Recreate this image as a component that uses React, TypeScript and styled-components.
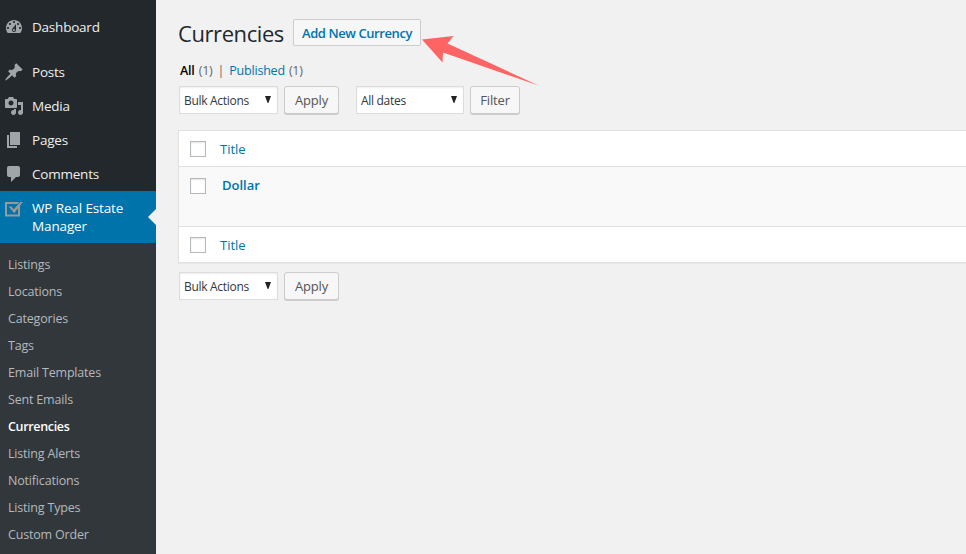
import React from "react";
import styled, { createGlobalStyle, css } from "styled-components";

const GlobalStyle = createGlobalStyle`
  *, *::before, *::after { box-sizing: border-box; }
  html, body { margin: 0; padding: 0; }
  body {
    background: #f1f1f1;
    color: #444;
    font-family: "Open Sans", "Noto Sans", sans-serif;
    font-size: 13px;
    overflow: hidden;
  }
  a { color: #0073aa; text-decoration: none; }
`;

const Page = styled.div`
  display: flex;
  width: 100%;
  height: 100vh;
  overflow: hidden;
`;

const Sidebar = styled.nav`
  flex: 0 0 156px;
  padding-top: 10px;
  background: #23282d;
`;

const MenuGap = styled.div`
  height: 11px;
`;

const MenuItem = styled.a<{ $active?: boolean }>`
  position: relative;
  display: flex;
  align-items: flex-start;
  min-height: 34px;
  padding: 8px 10px 8px 4px;
  color: ${(p) => (p.$active ? "#fff" : "#eee")};
  background: ${(p) => (p.$active ? "#0073aa" : "transparent")};
  font-size: 13.5px;
  line-height: 18px;

  ${(p) =>
    p.$active &&
    css`
      &::after {
        content: "";
        position: absolute;
        right: 0;
        top: 18px;
        border: 8px solid transparent;
        border-right-color: #f1f1f1;
        border-left-width: 0;
      }
    `}
`;

const MenuIcon = styled.svg<{ $active?: boolean }>`
  flex: 0 0 20px;
  width: 20px;
  height: 20px;
  margin: -1px 8px -1px 0;
  fill: ${(p) => (p.$active ? "#999" : "#a0a5aa")};
`;

const MenuLabel = styled.span<{ $wide?: boolean }>`
  letter-spacing: ${(p) => (p.$wide ? -0.13 : -0.22)}px;
  white-space: pre-line;
`;

const Submenu = styled.div`
  display: flex;
  flex-direction: column;
  padding: 8px 0;
  background: #32373c;
`;

const SubmenuItem = styled.a<{ $current?: boolean }>`
  height: 27px;
  padding-left: 8px;
  color: ${(p) => (p.$current ? "#fff" : "#b4b9be")};
  font-size: 12.5px;
  font-weight: ${(p) => (p.$current ? 600 : 400)};
  line-height: 27px;
  letter-spacing: ${(p) => (p.$current ? -0.33 : -0.18)}px;
`;

const Main = styled.main`
  position: relative;
  flex: 1;
  min-width: 0;
  padding: 19px 0 0 22px;
`;

const Heading = styled.header`
  display: flex;
  align-items: flex-start;
  height: 42px;
`;

const Title = styled.h1`
  width: 115px;
  margin: 0;
  color: #23282d;
  font-size: 22px;
  font-weight: 400;
  line-height: 28px;
  letter-spacing: -0.42px;
`;

const AddButton = styled.a`
  width: 128px;
  height: 27px;
  border: 1px solid #ccc;
  border-radius: 2px;
  background: #f7f7f7;
  font-size: 13px;
  font-weight: 600;
  line-height: 27px;
  letter-spacing: -0.42px;
  text-align: center;
`;

const Filters = styled.div`
  display: flex;
  height: 25px;
  padding-left: 2px;
  color: #666;
  font-size: 12.5px;
  line-height: 19px;
  letter-spacing: -0.2px;
`;

const FilterLink = styled.a<{ $current?: boolean }>`
  margin-right: 4px;
  color: ${(p) => (p.$current ? "#000" : "#0073aa")};
  font-weight: ${(p) => (p.$current ? 600 : 400)};
`;

const Divider = styled.span`
  margin: 0 5px 0 5px;
`;

const ActionBar = styled.div`
  display: flex;
  height: 29px;
  padding-left: 1px;
`;

const Select = styled.div<{ $width: number }>`
  display: flex;
  align-items: center;
  justify-content: space-between;
  width: ${(p) => p.$width}px;
  height: 28px;
  padding: 1px 6px 0 4px;
  border: 1px solid #ddd;
  background: #fff;
  box-shadow: inset 0 1px 2px rgba(0, 0, 0, 0.07);
  color: #32373c;
  font-size: 12px;
  letter-spacing: -0.3px;
`;

const Caret = styled.svg`
  width: 6px;
  height: 7px;
  margin-top: -2px;
  fill: #222;
`;

const Button = styled.button<{ $width: number; $gap?: number }>`
  width: ${(p) => p.$width}px;
  height: 28px;
  margin: 0 ${(p) => p.$gap ?? 0}px 0 6px;
  padding: 0;
  border: 1px solid #ccc;
  border-radius: 3px;
  background: #f7f7f7;
  box-shadow: 0 1px 0 #ccc;
  color: #555;
  font: inherit;
  line-height: 26px;
  letter-spacing: -0.15px;
`;

const Table = styled.div`
  margin: 15px 0 9px;
  border: 1px solid #e1e1e1;
  border-right: 0;
  background: #fff;
  box-shadow: 0 1px 1px rgba(0, 0, 0, 0.04);
`;

const Row = styled.div<{ $kind: "head" | "item" | "foot" }>`
  display: flex;
  align-items: flex-start;
  height: ${(p) => ({ head: 35, item: 61, foot: 35 })[p.$kind]}px;
  padding: ${(p) => ({ head: 10, item: 11, foot: 10 })[p.$kind]}px 0 0 11px;
  background: ${(p) => (p.$kind === "item" ? "#f9f9f9" : "#fff")};
  border: 0 solid #e1e1e1;
  border-width: ${(p) => (p.$kind === "item" ? "1px 0" : "0")};
`;

const Checkbox = styled.span`
  width: 16px;
  height: 16px;
  border: 1px solid #b4b9be;
  background: #fff;
  box-shadow: inset 0 1px 2px rgba(0, 0, 0, 0.1);
`;

const CellLink = styled.a<{ $strong?: boolean }>`
  margin: ${(p) => (p.$strong ? "-2px 0 0 16px" : "-1px 0 0 14px")};
  font-size: 13px;
  font-weight: ${(p) => (p.$strong ? 600 : 400)};
  line-height: 18px;
`;

const Pointer = styled.svg`
  position: absolute;
  left: 264px;
  top: 34px;
  width: 120px;
  height: 54px;
  fill: #ff6465;
`;

const DASHBOARD =
  "M3.76 16h12.48c1.1-1.37 1.76-3.11 1.76-5 0-4.42-3.58-8-8-8s-8 3.58-8 8c0 1.89.66 3.63 1.76 5zM10 4c.55 0 1 .45 1 1s-.45 1-1 1-1-.45-1-1 .45-1 1-1zM6 6c.55 0 1 .45 1 1s-.45 1-1 1-1-.45-1-1 .45-1 1-1zm8 0c.55 0 1 .45 1 1s-.45 1-1 1-1-.45-1-1 .45-1 1-1zm-5.37 5.55L12 7v6c0 1.1-.9 2-2 2s-2-.9-2-2c0-.57.24-1.08.63-1.45zM4 10c.55 0 1 .45 1 1s-.45 1-1 1-1-.45-1-1 .45-1 1-1zm12 0c.55 0 1 .45 1 1s-.45 1-1 1-1-.45-1-1 .45-1 1-1zm-5 3c0-.55-.45-1-1-1s-1 .45-1 1 .45 1 1 1 1-.45 1-1z";
const PIN =
  "M10.44 3.02l1.82-1.82 6.36 6.35-1.83 1.82c-1.05-.68-2.48-.57-3.41.36l-.75.75c-.92.93-1.04 2.35-.35 3.41l-1.83 1.82-2.41-2.41-2.8 2.79c-.42.42-3.38 2.71-3.8 2.29s1.86-3.39 2.28-3.81l2.79-2.79L4.1 9.36l1.83-1.82c1.05.69 2.48.57 3.4-.36l.75-.75c.93-.92 1.05-2.35.36-3.41z";
const MEDIA =
  "M13 11V4c0-.55-.45-1-1-1h-1.67L9 1H5L3.67 3H2c-.55 0-1 .45-1 1v7c0 .55.45 1 1 1h10c.55 0 1-.45 1-1zM7 4.5c1.38 0 2.5 1.12 2.5 2.5S8.38 9.5 7 9.5 4.5 8.38 4.5 7 5.62 4.5 7 4.5zM14 6h5v10.5c0 1.38-1.12 2.5-2.5 2.5S14 17.88 14 16.5s1.12-2.5 2.5-2.5c.17 0 .34.02.5.05V9h-3V6zm-4 8.05V13h2v3.5c0 1.38-1.12 2.5-2.5 2.5S7 17.88 7 16.5 8.12 14 9.5 14c.17 0 .34.02.5.05z";
const PAGES = "M6 15V2h10v13H6zm-1 1h8v2H3V5h2v11z";
const COMMENT =
  "M5 2h9c1.1 0 2 .9 2 2v7c0 1.1-.9 2-2 2h-2l-5 5v-5H5c-1.1 0-2-.9-2-2V4c0-1.1.9-2 2-2z";
const CHECKED =
  "M1 4h14.2l-1.7 2H3v10.5h11V9.6l2-2.5v11.4H1zM4.6 8.6h2.9l2.2 2.6L16.4 4h2.5L10.2 15.2z";

const mainItems = [
  { label: "Posts", icon: PIN },
  { label: "Media", icon: MEDIA },
  { label: "Pages", icon: PAGES },
  { label: "Comments", icon: COMMENT },
];

const subItems = [
  "Listings",
  "Locations",
  "Categories",
  "Tags",
  "Email Templates",
  "Sent Emails",
  "Currencies",
  "Listing Alerts",
  "Notifications",
  "Listing Types",
  "Custom Order",
];

function MenuEntry({ label, icon, active }: { label: string; icon: string; active?: boolean }) {
  return (
    <MenuItem $active={active}>
      <MenuIcon viewBox="0 0 20 20" $active={active}>
        <path d={icon} />
      </MenuIcon>
      <MenuLabel $wide={active}>{label}</MenuLabel>
    </MenuItem>
  );
}

function Dropdown({ label, width }: { label: string; width: number }) {
  return (
    <Select $width={width}>
      {label}
      <Caret viewBox="0 0 6 7">
        <path d="M0 0h6L3.4 7h-.8z" />
      </Caret>
    </Select>
  );
}

export default function App() {
  return (
    <>
      <GlobalStyle />
      <Page>
        <Sidebar>
          <MenuEntry label="Dashboard" icon={DASHBOARD} />
          <MenuGap />
          {mainItems.map((item) => (
            <MenuEntry key={item.label} {...item} />
          ))}
          <MenuEntry label={"WP Real Estate\nManager"} icon={CHECKED} active />
          <Submenu>
            {subItems.map((label) => (
              <SubmenuItem key={label} $current={label === "Currencies"}>
                {label}
              </SubmenuItem>
            ))}
          </Submenu>
        </Sidebar>
        <Main>
          <Heading>
            <Title>Currencies</Title>
            <AddButton>Add New Currency</AddButton>
          </Heading>
          <Filters>
            <FilterLink $current>All</FilterLink>
            <span>(1)</span>
            <Divider>|</Divider>
            <FilterLink>Published</FilterLink>
            <span>(1)</span>
          </Filters>
          <ActionBar>
            <Dropdown label="Bulk Actions" width={99} />
            <Button $width={55} $gap={17}>Apply</Button>
            <Dropdown label="All dates" width={108} />
            <Button $width={50}>Filter</Button>
          </ActionBar>
          <Table>
            <Row $kind="head">
              <Checkbox />
              <CellLink>Title</CellLink>
            </Row>
            <Row $kind="item">
              <Checkbox />
              <CellLink $strong>Dollar</CellLink>
            </Row>
            <Row $kind="foot">
              <Checkbox />
              <CellLink>Title</CellLink>
            </Row>
          </Table>
          <ActionBar>
            <Dropdown label="Bulk Actions" width={99} />
            <Button $width={55}>Apply</Button>
          </ActionBar>
          <Pointer viewBox="420 34 120 54">
            <path d="M422 39.5L453.5 36L447.5 43.5L538.5 85.5L443 52.5L442.5 62.5Z" />
          </Pointer>
        </Main>
      </Page>
    </>
  );
}
